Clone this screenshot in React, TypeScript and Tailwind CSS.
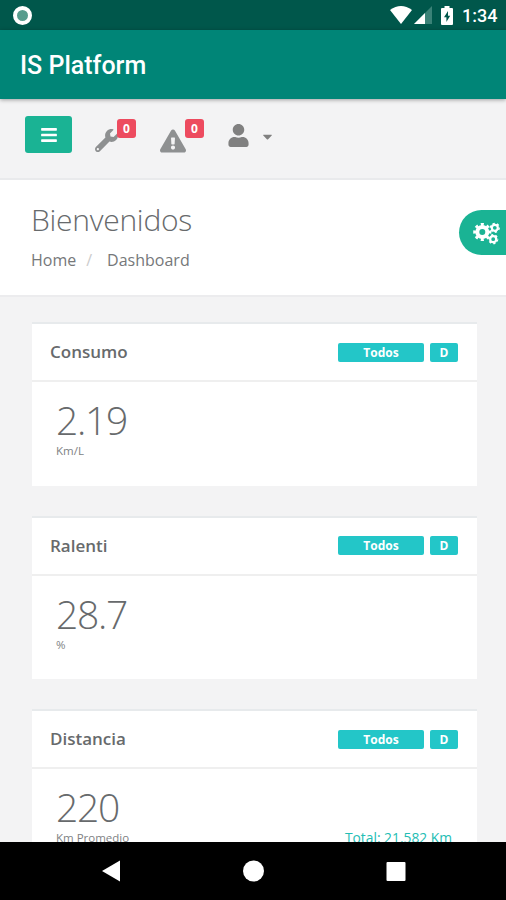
import React from 'react';
import { FaBars, FaCaretDown, FaExclamationTriangle, FaUser, FaWrench } from 'react-icons/fa';

const cards = [
    { title: 'Consumo', value: '2.19', unit: 'Km/L' },
    { title: 'Ralenti', value: '28.7', unit: '%' },
    { title: 'Distancia', value: '220', unit: 'Km Promedio', total: 'Total: 21.582 Km' },
]

const StatusBar = () => (
    <div className="h-[30px] shrink-0 bg-[#00574b] flex items-center justify-between pl-[13px] pr-[9px]">
        <div className="size-[19px] rounded-full border-4 border-white bg-[#579c8d]"></div>
        <div className="flex items-center">
            <svg width="22" height="18" viewBox="0 0 22 18" fill="#fff">
                <path d="M11 18 L0 4 Q11 -4 22 4 Z" />
            </svg>
            <svg className="ml-[2px]" width="18" height="18" viewBox="0 0 18 18">
                <path d="M0 18 L18 0 V18 Z" fill="#3a8277" />
                <path d="M0 18 L11 7 V18 Z" fill="#fff" />
            </svg>
            <svg className="ml-[9px]" width="12" height="19" viewBox="0 0 12 19">
                <path d="M1 2 H3.5 V0 H8.5 V2 H11 Q12 2 12 3 V18 Q12 19 11 19 H1 Q0 19 0 18 V3 Q0 2 1 2 Z" fill="#fff" />
                <path d="M7 5 L3 11.3 H5.4 V16 L9.2 9.7 H7 Z" fill="#00574b" />
            </svg>
            <span className="ml-[9px] w-[35px] text-[18px] leading-none font-medium text-white whitespace-nowrap font-['Roboto',sans-serif] mt-[2px]">1:34</span>
        </div>
    </div>
)

const Toolbar = () => (
    <div className="h-[81px] shrink-0 bg-[#f3f3f4] border-b-2 border-[#e9eaec] flex items-start pl-[25px]">
        <button className="mt-[17px] w-[47px] h-[37px] rounded-[3px] bg-[#1ab394] flex items-center justify-center text-white">
            <FaBars size={18} />
        </button>
        <div className="relative mt-[30px] ml-[23px]">
            <FaWrench size={23} color="#8e9091" />
            <span className="absolute -top-[10px] left-[22px] w-[19px] h-[19px] rounded-[3px] bg-[#ed4b5f] text-white text-[12px] leading-[19px] font-bold text-center">0</span>
        </div>
        <div className="relative mt-[29px] ml-[42px]">
            <FaExclamationTriangle size={26} color="#8e9091" />
            <span className="absolute -top-[9px] left-[25px] w-[19px] h-[19px] rounded-[3px] bg-[#ed4b5f] text-white text-[12px] leading-[19px] font-bold text-center">0</span>
        </div>
        <FaUser className="mt-[25px] ml-[41px]" size={23} color="#808080" />
        <FaCaretDown className="mt-[30px] ml-[10px]" size={15} color="#808080" />
    </div>
)

// one big gear and two small ones, the teeth are the dashes of the outer ring
const Cogs = () => (
    <svg className="shrink-0" width="27" height="24" viewBox="0 0 27 24" fill="none" stroke="#fff">
        <circle cx="9.3" cy="11" r="5" strokeWidth="4" />
        <circle cx="9.3" cy="11" r="7.6" strokeWidth="3" pathLength="80" strokeDasharray="5 5" strokeDashoffset="2.5" />
        <circle cx="21.8" cy="6.8" r="3" strokeWidth="2.2" />
        <circle cx="21.8" cy="6.8" r="4.3" strokeWidth="1.6" pathLength="60" strokeDasharray="5 5" />
        <circle cx="20.2" cy="18.2" r="3" strokeWidth="2.2" />
        <circle cx="20.2" cy="18.2" r="4.3" strokeWidth="1.6" pathLength="60" strokeDasharray="5 5" />
    </svg>
)

const Heading = () => (
    <div className="h-[117px] shrink-0 bg-white border-b-2 border-[#ececee] flex justify-between">
        <div className="pl-[31px] pt-[20px]">
            <h2 className="text-[30px] leading-[40px] font-light tracking-[-0.27px] text-[#676a6c]">Bienvenidos</h2>
            <div className="flex text-[16px] leading-6 text-[#76787a] mt-[8px]">
                <span>Home</span>
                <span className="ml-[10px] text-[#cccccc]">/</span>
                <span className="ml-[15px]">Dashboard</span>
            </div>
        </div>
        <div className="mt-[30px] w-[47px] h-[45px] rounded-l-full bg-[#1ab394] flex items-center pl-[14px]">
            <Cogs />
        </div>
    </div>
)

const Card = ({ title, value, unit, total }: { title: string; value: string; unit: string; total?: string }) => (
    <div className="h-[163.5px] shrink-0 bg-white border-t-2 border-[#e7eaec]">
        <div className="h-[58px] border-b-2 border-[#efefef] flex items-center pl-[18px] pr-[19px]">
            <h5 className="flex-1 text-[17px] leading-6 font-semibold text-[#676a6c]">{title}</h5>
            <span className="w-[86px] h-[19px] rounded-[2px] bg-[#23c6c8] text-white text-[12px] leading-[19px] font-bold text-center">Todos</span>
            <span className="ml-[6px] w-[28px] h-[19px] rounded-[2px] bg-[#23c6c8] text-white text-[12px] leading-[19px] font-bold text-center">D</span>
        </div>
        <div className="pt-[15px] pl-6 pr-[25px]">
            <h1 className="text-[39px] leading-[46px] font-light tracking-[-1.3px] text-[#676a6c]">{value}</h1>
            <div className="flex items-start justify-between">
                <small className="text-[11.5px] leading-4 text-[#808284]">{unit}</small>
                {total && <span className="text-[13.8px] leading-[15px] text-[#23bdb4]">{total}</span>}
            </div>
        </div>
    </div>
)

const App = () => {
    return (
        <div className="w-[506px] h-[900px] overflow-hidden flex flex-col bg-[#f3f3f4] font-['Open_Sans',sans-serif]">
            <StatusBar />
            <div className="relative h-[69px] shrink-0 bg-[#008577] flex items-center pl-5 pt-[2px] shadow-[0_1px_4px_rgba(0,0,0,0.35)]">
                <h1 className="text-[25px] leading-none font-medium text-white font-['Roboto',sans-serif]">IS Platform</h1>
            </div>
            <Toolbar />
            <Heading />
            <div className="flex-1 min-h-0 overflow-hidden flex flex-col gap-[30px] pt-[25px] pl-8 pr-[29px]">
                {cards.map((card) => (
                    <Card key={card.title} {...card} />
                ))}
            </div>
            <div className="h-[58px] shrink-0 bg-black flex items-center">
                <svg width="506" height="58" viewBox="0 0 506 58" fill="#fff">
                    <path d="M102 29 L120 18.5 V39.5 Z" />
                    <circle cx="253.5" cy="29" r="10.5" />
                    <rect x="386.5" y="20" width="19" height="19" rx="1" />
                </svg>
            </div>
        </div>
    )
}

export default App
